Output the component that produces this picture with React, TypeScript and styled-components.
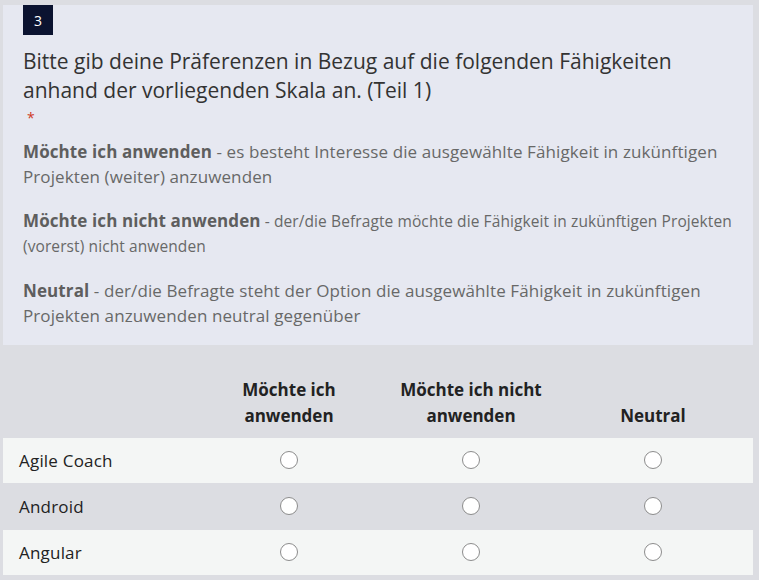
import React from 'react';
import styled, { createGlobalStyle } from 'styled-components';

const GlobalStyle = createGlobalStyle`
    html, body {
        margin: 0;
        padding: 0;
        background: #dcdde2;
    }
    body {
        font-family: 'Open Sans', 'Noto Sans', sans-serif;
    }
`;

const Page = styled.div`
    padding: 5px 6px 0 3px;
`;

const Card = styled.div`
    background: #e6e8f1;
    padding: 0 20px 17px 20px;
`;

const Badge = styled.div`
    width: 30px;
    height: 30px;
    background: #0b1330;
    color: #fff;
    font-size: 14px;
    display: flex;
    align-items: center;
    justify-content: center;
`;

const Title = styled.h2`
    margin: 12px 0 0;
    font-size: 21px;
    line-height: 29px;
    font-weight: 400;
    color: #333;
`;

const Required = styled.div`
    color: #cf3a1f;
    font-size: 14px;
    line-height: 20px;
    padding: 3px 0 0 4px;
    margin-bottom: 11px;
`;

const Desc = styled.p<{ small?: boolean }>`
    margin: 0 0 19px;
    font-size: ${({ small }) => (small ? '15.5px' : '17px')};
    letter-spacing: 0.1px;
    line-height: 25px;
    color: #686868;

    b {
        font-size: 17px;
        font-weight: 700;
        color: #5e5e5e;
    }

    &:last-child {
        margin-bottom: 0;
    }
`;

const Table = styled.table`
    width: 750px;
    border-collapse: collapse;
    table-layout: fixed;
`;

const HeadCell = styled.th`
    height: 84px;
    padding: 0 10px 8px;
    vertical-align: bottom;
    font-size: 17px;
    line-height: 26px;
    font-weight: 700;
    color: #222;
    text-align: center;
`;

const Row = styled.tr<{ alt?: boolean }>`
    background: ${({ alt }) => (alt ? '#dcdde2' : '#f4f6f5')};
    border-top: 1px solid #dcdde2;
`;

const LabelCell = styled.td`
    height: 45px;
    padding: 0 0 0 16px;
    font-size: 17px;
    letter-spacing: 0.2px;
    color: #222;
`;

const RadioCell = styled.td`
    padding: 0 0 2px;
    vertical-align: middle;
`;

const Radio = styled.span`
    display: block;
    margin: 0 auto;
    width: 16px;
    height: 16px;
    border: 1px solid #8c8c8c;
    border-radius: 50%;
    background: #fff;
`;

const skills = ['Agile Coach', 'Android', 'Angular'];
const options = [
    ['Möchte ich', 'anwenden'],
    ['Möchte ich nicht', 'anwenden'],
    ['Neutral'],
];

export default function App() {
    return (
        <Page>
            <GlobalStyle />
            <Card>
                <Badge>3</Badge>
                <Title>
                    Bitte gib deine Präferenzen in Bezug auf die folgenden Fähigkeiten anhand der vorliegenden Skala
                    an. (Teil 1)
                </Title>
                <Required>*</Required>
                <Desc>
                    <b>Möchte ich anwenden</b> - es besteht Interesse die ausgewählte Fähigkeit in zukünftigen
                    Projekten (weiter) anzuwenden
                </Desc>
                <Desc small>
                    <b>Möchte ich nicht anwenden</b> - der/die Befragte möchte die Fähigkeit in zukünftigen Projekten
                    (vorerst) nicht anwenden
                </Desc>
                <Desc>
                    <b>Neutral</b> - der/die Befragte steht der Option die ausgewählte Fähigkeit in zukünftigen
                    Projekten anzuwenden neutral gegenüber
                </Desc>
            </Card>
            <Table>
                <colgroup>
                    <col style={{ width: 195 }} />
                    <col style={{ width: 182 }} />
                    <col style={{ width: 182 }} />
                    <col style={{ width: 182 }} />
                    <col />
                </colgroup>
                <thead>
                    <tr>
                        <HeadCell />
                        {options.map((o, i) => (
                            <HeadCell key={i}>
                                {o.map((l, j) => (
                                    <div key={j}>{l}</div>
                                ))}
                            </HeadCell>
                        ))}
                        <HeadCell />
                    </tr>
                </thead>
                <tbody>
                    {skills.map((s, i) => (
                        <Row key={s} alt={i % 2 === 1}>
                            <LabelCell>{s}</LabelCell>
                            {options.map((_, j) => (
                                <RadioCell key={j}>
                                    <Radio />
                                </RadioCell>
                            ))}
                            <td />
                        </Row>
                    ))}
                </tbody>
            </Table>
        </Page>
    );
}
